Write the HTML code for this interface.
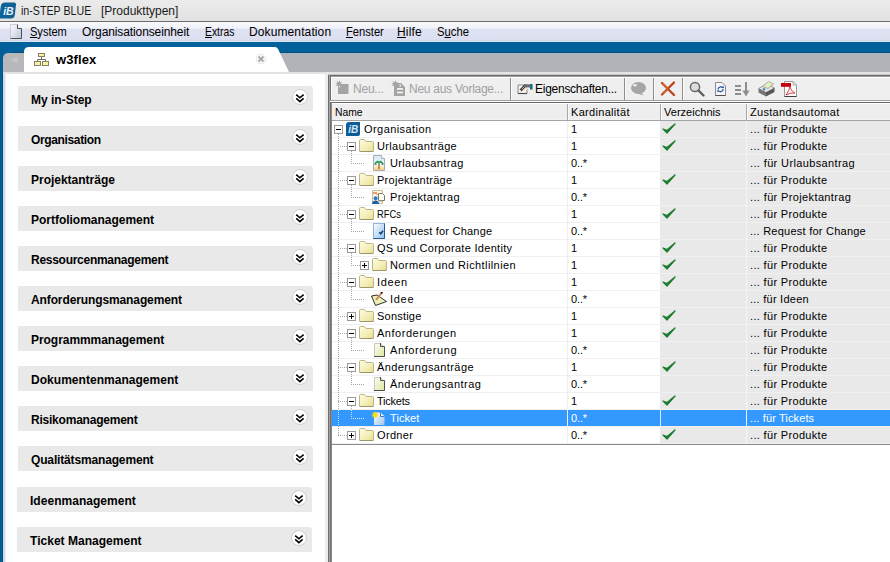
<!DOCTYPE html><html><head><meta charset="utf-8"><style>
*{margin:0;padding:0;box-sizing:border-box}
html,body{width:890px;height:562px;overflow:hidden;background:#fff;font-family:"Liberation Sans", sans-serif;font-size:12px;color:#000}
.abs{position:absolute}
.t{position:absolute;white-space:pre;line-height:16px}
.sec{position:absolute;width:295px;height:25px;background:#e9e9e9;border-radius:1px 3px 0 0}
.chev{position:absolute;left:274px;top:3px;width:16px;height:16px;border-radius:50%;background:#fff;border:1px solid #cfcfcf}
.exp{position:absolute;width:9px;height:9px;border:1px solid #9a9a9a;background:#fff}
</style></head><body>
<div class="abs" style="left:0;top:0;width:890px;height:21px;background:linear-gradient(#ebebeb,#e2e2e2)"></div>
<svg class="abs" style="left:0;top:2px" width="17" height="17" viewBox="0 0 17 17"><path d="M5 0.5 H14 Q16.5 0.5 16 3 L14.8 13 Q14.3 16.5 11 16.5 H1 Q-1 16.5 -0.5 14 L0.8 4 Q1.3 0.5 5 0.5Z" fill="#0f6298"/><text x="3.2" y="12.6" font-family="Liberation Sans" font-weight="bold" font-style="italic" font-size="10.5" fill="#e8f4fc">iB</text></svg>
<div class="t" style="left:21px;top:3px;font-size:12px;color:#1a1a1a;letter-spacing:0;transform:scaleX(0.8884);transform-origin:0 0">in-STEP BLUE</div>
<div class="t" style="left:101px;top:3px;font-size:12px;color:#1a1a1a;letter-spacing:-0.003px">[Produkttypen]</div>
<div class="abs" style="left:0;top:21px;width:890px;height:1px;background:#6e6e6e"></div>
<div class="abs" style="left:0;top:22px;width:890px;height:19px;background:linear-gradient(#f8f9fd 0,#f1f3fa 6px,#dfe2f1 7px,#dcdff0 18px,#cdd0de 19px)"></div>
<div class="abs" style="left:0;top:41px;width:890px;height:1px;background:#d6eaf6"></div>
<svg class="abs" style="left:10px;top:24px" width="12" height="15" viewBox="0 0 12 15"><defs><linearGradient id="mg" x1="0" y1="0" x2="1" y2="1"><stop offset="0" stop-color="#ffffff"/><stop offset="1" stop-color="#b8c4d8"/></linearGradient></defs><path d="M0.5 14.5 V0.5 H7.5 V4.5 H11.5 V14.5Z" fill="url(#mg)" stroke="#c8ccd4"/><path d="M7.5 0.5 V4.5 H11.5 V14.5 H0.5" fill="none" stroke="#505050"/></svg>
<div class="t" style="left:30px;top:24px;font-size:12px;letter-spacing:0;transform:scaleX(0.9197);transform-origin:0 0"><u>S</u>ystem</div>
<div class="t" style="left:82px;top:24px;font-size:12px;letter-spacing:-0.109px">Organisationseinheit</div>
<div class="t" style="left:205px;top:24px;font-size:12px;letter-spacing:0;transform:scaleX(0.8616);transform-origin:0 0"><u>E</u>xtras</div>
<div class="t" style="left:249px;top:24px;font-size:12px;letter-spacing:0.113px">Dokumentation</div>
<div class="t" style="left:346px;top:24px;font-size:12px;letter-spacing:0;transform:scaleX(0.9291);transform-origin:0 0"><u>F</u>enster</div>
<div class="t" style="left:397px;top:24px;font-size:12px;letter-spacing:0.192px"><u>H</u>ilfe</div>
<div class="t" style="left:437px;top:24px;font-size:12px;letter-spacing:0;transform:scaleX(0.9374);transform-origin:0 0">S<u>u</u>che</div>
<div class="abs" style="left:0;top:42px;width:890px;height:10px;background:#02619a"></div>
<div class="abs" style="left:0;top:52px;width:890px;height:1px;background:#0a4f7c"></div>
<div class="abs" style="left:0;top:53px;width:890px;height:1px;background:#a2b9c9"></div>
<div class="abs" style="left:0;top:42px;width:3px;height:520px;background:#045f97"></div>
<div class="abs" style="left:2px;top:72px;width:1px;height:490px;background:#0b4f7a"></div>
<div class="abs" style="left:3px;top:72px;width:1px;height:490px;background:#c6e2f2"></div>
<div class="abs" style="left:4px;top:74px;width:1px;height:488px;background:#dadada"></div>
<div class="abs" style="left:5px;top:74px;width:1px;height:488px;background:#efefef"></div>
<div class="abs" style="left:30px;top:54px;width:860px;height:18px;background:#b0b3b7"></div>
<div class="abs" style="left:3px;top:52px;width:10px;height:10px;background:#045f97"></div>
<div class="abs" style="left:3px;top:53px;width:30px;height:19px;background:#b7b8bb;border-top-left-radius:5px"></div>
<svg class="abs" style="left:8px;top:55px" width="12" height="10" viewBox="0 0 12 10"><path d="M9.5 1.5 L2 5 L9.5 8.5Z" fill="#c4c5c8"/></svg>
<svg class="abs" style="left:0;top:46px" width="300" height="28" viewBox="0 0 300 28"><path d="M24 27 V6 Q24 1 29 1 H275 Q277 1 278 3 L289.5 27 Z" fill="#ffffff"/></svg>
<svg class="abs" style="left:34px;top:53px" width="15" height="13" viewBox="0 0 15 13"><g fill="#f6f0a8" stroke="#86805e"><rect x="4.5" y="0.5" width="6" height="3"/><rect x="0.5" y="8.5" width="6" height="4"/><rect x="8.5" y="8.5" width="6" height="4"/></g><path d="M7.5 4 V6.5 M3.5 8 V6.5 H11.5 V8" stroke="#6e6e68" fill="none"/></svg>
<div class="t" style="left:56px;top:52px;font-size:13px;font-weight:700;letter-spacing:0.097px">w3flex</div>
<svg class="abs" style="left:255px;top:53px" width="12" height="12" viewBox="0 0 12 12"><circle cx="6" cy="6" r="4.8" fill="#fafafa" stroke="#e6e6e6"/><path d="M3.5 3.5 L8.5 8.5 M8.5 3.5 L3.5 8.5" stroke="#a9a9a9" stroke-width="1.8"/></svg>
<div class="abs" style="left:4px;top:72px;width:886px;height:2px;background:#e3e4e6"></div>
<div class="abs" style="left:325px;top:73px;width:3px;height:489px;background:#ececec"></div>
<div class="sec" style="left:18px;top:86px"><div class="chev"><svg class="abs" style="left:-1px;top:-1px" width="16" height="16" viewBox="0 0 16 16"><path d="M4.2 5.6 L7.9 8.8 L11.6 5.6 M4.2 9.4 L7.9 12.6 L11.6 9.4" fill="none" stroke="#000" stroke-width="1.6"/></svg></div></div>
<div class="t" style="left:31px;top:92px;font-size:12px;font-weight:700;color:#000;letter-spacing:-0.004px">My in-Step</div>
<div class="sec" style="left:18px;top:126px"><div class="chev"><svg class="abs" style="left:-1px;top:-1px" width="16" height="16" viewBox="0 0 16 16"><path d="M4.2 5.6 L7.9 8.8 L11.6 5.6 M4.2 9.4 L7.9 12.6 L11.6 9.4" fill="none" stroke="#000" stroke-width="1.6"/></svg></div></div>
<div class="t" style="left:31px;top:132px;font-size:12px;font-weight:700;color:#000;letter-spacing:-0.353px">Organisation</div>
<div class="sec" style="left:18px;top:166px"><div class="chev"><svg class="abs" style="left:-1px;top:-1px" width="16" height="16" viewBox="0 0 16 16"><path d="M4.2 5.6 L7.9 8.8 L11.6 5.6 M4.2 9.4 L7.9 12.6 L11.6 9.4" fill="none" stroke="#000" stroke-width="1.6"/></svg></div></div>
<div class="t" style="left:31px;top:172px;font-size:12px;font-weight:700;color:#000;letter-spacing:-0.012px">Projektanträge</div>
<div class="sec" style="left:18px;top:206px"><div class="chev"><svg class="abs" style="left:-1px;top:-1px" width="16" height="16" viewBox="0 0 16 16"><path d="M4.2 5.6 L7.9 8.8 L11.6 5.6 M4.2 9.4 L7.9 12.6 L11.6 9.4" fill="none" stroke="#000" stroke-width="1.6"/></svg></div></div>
<div class="t" style="left:31px;top:212px;font-size:12px;font-weight:700;color:#000;letter-spacing:-0.019px">Portfoliomanagement</div>
<div class="sec" style="left:18px;top:246px"><div class="chev"><svg class="abs" style="left:-1px;top:-1px" width="16" height="16" viewBox="0 0 16 16"><path d="M4.2 5.6 L7.9 8.8 L11.6 5.6 M4.2 9.4 L7.9 12.6 L11.6 9.4" fill="none" stroke="#000" stroke-width="1.6"/></svg></div></div>
<div class="t" style="left:31px;top:252px;font-size:12px;font-weight:700;color:#000;letter-spacing:-0.275px">Ressourcenmanagement</div>
<div class="sec" style="left:18px;top:286px"><div class="chev"><svg class="abs" style="left:-1px;top:-1px" width="16" height="16" viewBox="0 0 16 16"><path d="M4.2 5.6 L7.9 8.8 L11.6 5.6 M4.2 9.4 L7.9 12.6 L11.6 9.4" fill="none" stroke="#000" stroke-width="1.6"/></svg></div></div>
<div class="t" style="left:31px;top:292px;font-size:12px;font-weight:700;color:#000;letter-spacing:-0.112px">Anforderungsmanagement</div>
<div class="sec" style="left:18px;top:326px"><div class="chev"><svg class="abs" style="left:-1px;top:-1px" width="16" height="16" viewBox="0 0 16 16"><path d="M4.2 5.6 L7.9 8.8 L11.6 5.6 M4.2 9.4 L7.9 12.6 L11.6 9.4" fill="none" stroke="#000" stroke-width="1.6"/></svg></div></div>
<div class="t" style="left:31px;top:332px;font-size:12px;font-weight:700;color:#000;letter-spacing:-0.050px">Programmmanagement</div>
<div class="sec" style="left:18px;top:366px"><div class="chev"><svg class="abs" style="left:-1px;top:-1px" width="16" height="16" viewBox="0 0 16 16"><path d="M4.2 5.6 L7.9 8.8 L11.6 5.6 M4.2 9.4 L7.9 12.6 L11.6 9.4" fill="none" stroke="#000" stroke-width="1.6"/></svg></div></div>
<div class="t" style="left:31px;top:372px;font-size:12px;font-weight:700;color:#000;letter-spacing:0.032px">Dokumentenmanagement</div>
<div class="sec" style="left:18px;top:406px"><div class="chev"><svg class="abs" style="left:-1px;top:-1px" width="16" height="16" viewBox="0 0 16 16"><path d="M4.2 5.6 L7.9 8.8 L11.6 5.6 M4.2 9.4 L7.9 12.6 L11.6 9.4" fill="none" stroke="#000" stroke-width="1.6"/></svg></div></div>
<div class="t" style="left:31px;top:412px;font-size:12px;font-weight:700;color:#000;letter-spacing:-0.222px">Risikomanagement</div>
<div class="sec" style="left:18px;top:446px"><div class="chev"><svg class="abs" style="left:-1px;top:-1px" width="16" height="16" viewBox="0 0 16 16"><path d="M4.2 5.6 L7.9 8.8 L11.6 5.6 M4.2 9.4 L7.9 12.6 L11.6 9.4" fill="none" stroke="#000" stroke-width="1.6"/></svg></div></div>
<div class="t" style="left:31px;top:452px;font-size:12px;font-weight:700;color:#000;letter-spacing:-0.154px">Qualitätsmanagement</div>
<div class="sec" style="left:17px;top:487px"><div class="chev"><svg class="abs" style="left:-1px;top:-1px" width="16" height="16" viewBox="0 0 16 16"><path d="M4.2 5.6 L7.9 8.8 L11.6 5.6 M4.2 9.4 L7.9 12.6 L11.6 9.4" fill="none" stroke="#000" stroke-width="1.6"/></svg></div></div>
<div class="t" style="left:30px;top:493px;font-size:12px;font-weight:700;color:#000;letter-spacing:0.031px">Ideenmanagement</div>
<div class="sec" style="left:17px;top:527px"><div class="chev"><svg class="abs" style="left:-1px;top:-1px" width="16" height="16" viewBox="0 0 16 16"><path d="M4.2 5.6 L7.9 8.8 L11.6 5.6 M4.2 9.4 L7.9 12.6 L11.6 9.4" fill="none" stroke="#000" stroke-width="1.6"/></svg></div></div>
<div class="t" style="left:30px;top:533px;font-size:12px;font-weight:700;color:#000;letter-spacing:0.022px">Ticket Management</div>
<div class="abs" style="left:328px;top:74px;width:562px;height:1px;background:#c8c8c8"></div>
<div class="abs" style="left:328px;top:75px;width:562px;height:1px;background:#6a6a6a"></div>
<div class="abs" style="left:328px;top:76px;width:562px;height:1px;background:#9c9c9c"></div>
<div class="abs" style="left:331px;top:77px;width:559px;height:1px;background:#ffffff"></div>
<div class="abs" style="left:332px;top:78px;width:558px;height:22px;background:#efefef"></div>
<div class="abs" style="left:328px;top:75px;width:1px;height:487px;background:#6e6e6e"></div>
<div class="abs" style="left:329px;top:75px;width:1px;height:487px;background:#a2a2a2"></div>
<div class="abs" style="left:330px;top:75px;width:1px;height:487px;background:#6e6e6e"></div>
<div class="abs" style="left:331px;top:77px;width:1px;height:24px;background:#ffffff"></div>
<div class="abs" style="left:330px;top:100px;width:560px;height:1px;background:#a0a0a0"></div>
<div class="abs" style="left:330px;top:101px;width:560px;height:1px;background:#ffffff"></div>
<div class="abs" style="left:330px;top:102px;width:560px;height:1px;background:#6a6a6a"></div>
<div class="abs" style="left:331px;top:102px;width:1px;height:460px;background:#8a8a8a"></div>
<svg class="abs" style="left:332px;top:77px" width="558" height="24" viewBox="0 0 558 24"><rect x="6" y="7" width="10.5" height="10" fill="#a4a4a4"/><path d="M10.92,7.79 L8.49,8.01 L9.21,10.33 L7.34,8.77 L6.21,10.92 L5.99,8.49 L3.67,9.21 L5.23,7.34 L3.08,6.21 L5.51,5.99 L4.79,3.67 L6.66,5.23 L7.79,3.08 L8.01,5.51 L10.33,4.79 L8.77,6.66Z" fill="#a4a4a4"/><rect x="7" y="9" width="1.2" height="1.2" fill="#f4f4f4"/><path d="M62 6 H69 L73 10 V19 H62Z" fill="#a4a4a4"/><rect x="65" y="11" width="6" height="1.8" fill="#efefef"/><rect x="65" y="14.6" width="6" height="1.8" fill="#efefef"/><rect x="67.5" y="7.5" width="1.5" height="2" fill="#efefef"/><path d="M66.92,7.79 L64.49,8.01 L65.21,10.33 L63.34,8.77 L62.21,10.92 L61.99,8.49 L59.67,9.21 L61.23,7.34 L59.08,6.21 L61.51,5.99 L60.79,3.67 L62.66,5.23 L63.79,3.08 L64.01,5.51 L66.33,4.79 L64.77,6.66Z" fill="#a4a4a4"/><rect x="178" y="1" width="1" height="22" fill="#8e8e8e"/><rect x="179" y="1" width="1" height="22" fill="#fafafa"/><rect x="292" y="1" width="1" height="22" fill="#8e8e8e"/><rect x="293" y="1" width="1" height="22" fill="#fafafa"/><rect x="321" y="1" width="1" height="22" fill="#8e8e8e"/><rect x="322" y="1" width="1" height="22" fill="#fafafa"/><rect x="350" y="1" width="1" height="22" fill="#8e8e8e"/><rect x="351" y="1" width="1" height="22" fill="#fafafa"/><path d="M186 8 H195 V16.5 H186Z" fill="#f6f6f6" stroke="#7a7a7a" stroke-width="0.9"/><path d="M186 16.5 H195" stroke="#505050" stroke-width="1.2"/><path d="M188.5 13.5 L193 9 H198" fill="none" stroke="#404040" stroke-width="2.8"/><path d="M188.5 13.5 L193 9 H198" fill="none" stroke="#e8e8e8" stroke-width="1" stroke-dasharray="1 1"/><path d="M190 14 L193.5 10.5 H197.5 L195 13 H191Z" fill="#f4e0c8"/><rect x="198" y="7" width="2.6" height="5.5" fill="#17708f"/><ellipse cx="306.5" cy="11" rx="7.5" ry="6" fill="#a6a6a6"/><path d="M308 15 L312 18.5 L303 16Z" fill="#a6a6a6"/><ellipse cx="303" cy="8.3" rx="2" ry="1.1" fill="#f4f4f4"/><path d="M330 6 L342 18 M342 5.5 L330 17.5" stroke="#b8481c" stroke-width="2.4" stroke-linecap="round"/><path d="M330.5 6.2 L336 11.5 M331 16.5 L335 12.5" stroke="#f08040" stroke-width="1"/><circle cx="363" cy="10" r="4.6" fill="#dcdcdc" stroke="#6a6a6a" stroke-width="1.5"/><path d="M366.5 13.5 L371.5 18.5" stroke="#5e5e5e" stroke-width="2.4" stroke-linecap="round"/><path d="M383.5 5.5 H390 L393.5 9 V18.5 H383.5Z" fill="#f6f6f6" stroke="#8a8a8a"/><path d="M383.5 18.5 H393.5" stroke="#505050"/><path d="M386 12.5 A2.8 2.8 0 0 1 391 11 M391.2 12 A2.8 2.8 0 0 1 386.2 13.5" stroke="#1a4fa0" fill="none" stroke-width="1.2"/><path d="M390 10 L391.8 11.6 L392 9.3Z M387 14.5 L385.5 12.8 L385.2 15Z" fill="#1a4fa0"/><g fill="#8e8e8e"><rect x="403" y="8" width="6" height="2"/><rect x="403" y="12" width="6" height="2"/><rect x="403" y="16" width="6" height="2"/><rect x="413" y="5" width="2" height="10"/><path d="M410.5 13.5 H417.5 L414 19.5Z"/></g><path d="M426.5 11.5 L435 7 L442.5 11 L434 15.5Z" fill="#e4e4e4" stroke="#8a8a8a" stroke-width="0.8"/><path d="M426.5 11.5 L434 15.5 V19.5 L426.5 15.5Z" fill="#6e6e6e"/><path d="M434 15.5 L442.5 11 V15 L434 19.5Z" fill="#4e4e4e"/><path d="M430.5 9.5 L436.5 4.5 L441.5 7 L436 11.5Z" fill="#e6eec0" stroke="#9a9a88" stroke-width="0.8"/><circle cx="432" cy="12.2" r="1.2" fill="#3a8ad0"/><path d="M427 14 L434 17.8 L442 13.5" stroke="#9a9a9a" stroke-width="0.7" fill="none" stroke-dasharray="1 1"/><path d="M452.5 4.5 H461 L464.5 8 V19.5 H452.5Z" fill="#fbfbfb" stroke="#9a9a9a"/><path d="M452.5 19.5 H464.5" stroke="#404040"/><path d="M461 4.5 V8 H464.5" fill="none" stroke="#b0b0b0"/><rect x="449" y="6" width="10" height="3.8" fill="#c4000e"/><path d="M454 18 Q457 14 458 9.5 Q458.5 14 463 16 Q458 15.5 454 18Z" fill="none" stroke="#d83030" stroke-width="0.9"/></svg>
<div class="t" style="left:353px;top:81px;font-size:12px;color:#a0a0a0;letter-spacing:-0.216px">Neu...</div>
<div class="t" style="left:409px;top:81px;font-size:12px;color:#a0a0a0;letter-spacing:-0.264px">Neu aus Vorlage...</div>
<div class="t" style="left:535px;top:81px;font-size:12px;letter-spacing:-0.262px">Eigenschaften...</div>
<div class="abs" style="left:332px;top:103px;width:558px;height:1px;background:#ffffff"></div>
<div class="abs" style="left:332px;top:104px;width:558px;height:16px;background:linear-gradient(#eeeeee 0,#eeeeee 15px,#f6f6f6 16px)"></div>
<div class="abs" style="left:332px;top:120px;width:558px;height:1px;background:#a4a4a4"></div>
<div class="abs" style="left:567px;top:104px;width:1px;height:16px;background:#a8a8a8"></div><div class="abs" style="left:568px;top:104px;width:1px;height:16px;background:#fbfbfb"></div>
<div class="abs" style="left:660px;top:104px;width:1px;height:16px;background:#a8a8a8"></div><div class="abs" style="left:661px;top:104px;width:1px;height:16px;background:#fbfbfb"></div>
<div class="abs" style="left:746px;top:104px;width:1px;height:16px;background:#a8a8a8"></div><div class="abs" style="left:747px;top:104px;width:1px;height:16px;background:#fbfbfb"></div>
<div class="t" style="left:335px;top:104px;font-size:11px;letter-spacing:0;transform:scaleX(0.9410);transform-origin:0 0">Name</div>
<div class="t" style="left:571px;top:104px;font-size:11px;letter-spacing:0.311px">Kardinalität</div>
<div class="t" style="left:664px;top:104px;font-size:11px;letter-spacing:0.025px">Verzeichnis</div>
<div class="t" style="left:750px;top:104px;font-size:11px;letter-spacing:0.305px">Zustandsautomat</div>
<div class="abs" style="left:660px;top:121px;width:230px;height:323px;background:#e9e9e9"></div>
<div class="abs" style="left:332px;top:137px;width:558px;height:1px;background:#f0f0f0"></div>
<div class="abs" style="left:332px;top:154px;width:558px;height:1px;background:#f0f0f0"></div>
<div class="abs" style="left:332px;top:171px;width:558px;height:1px;background:#f0f0f0"></div>
<div class="abs" style="left:332px;top:188px;width:558px;height:1px;background:#f0f0f0"></div>
<div class="abs" style="left:332px;top:205px;width:558px;height:1px;background:#f0f0f0"></div>
<div class="abs" style="left:332px;top:222px;width:558px;height:1px;background:#f0f0f0"></div>
<div class="abs" style="left:332px;top:239px;width:558px;height:1px;background:#f0f0f0"></div>
<div class="abs" style="left:332px;top:256px;width:558px;height:1px;background:#f0f0f0"></div>
<div class="abs" style="left:332px;top:273px;width:558px;height:1px;background:#f0f0f0"></div>
<div class="abs" style="left:332px;top:290px;width:558px;height:1px;background:#f0f0f0"></div>
<div class="abs" style="left:332px;top:307px;width:558px;height:1px;background:#f0f0f0"></div>
<div class="abs" style="left:332px;top:324px;width:558px;height:1px;background:#f0f0f0"></div>
<div class="abs" style="left:332px;top:341px;width:558px;height:1px;background:#f0f0f0"></div>
<div class="abs" style="left:332px;top:358px;width:558px;height:1px;background:#f0f0f0"></div>
<div class="abs" style="left:332px;top:375px;width:558px;height:1px;background:#f0f0f0"></div>
<div class="abs" style="left:332px;top:392px;width:558px;height:1px;background:#f0f0f0"></div>
<div class="abs" style="left:332px;top:409px;width:558px;height:1px;background:#f0f0f0"></div>
<div class="abs" style="left:332px;top:426px;width:558px;height:1px;background:#f0f0f0"></div>
<div class="abs" style="left:332px;top:410px;width:558px;height:16px;background:#3399ff"></div>
<div class="abs" style="left:332px;top:443px;width:558px;height:1px;background:#f0f0f0"></div>
<div class="abs" style="left:567px;top:121px;width:1px;height:323px;background:#efefef"></div>
<div class="abs" style="left:746px;top:121px;width:1px;height:323px;background:#f4f4f4"></div>
<div class="abs" style="left:660px;top:410px;width:1px;height:16px;background:#dcecff"></div>
<div class="abs" style="left:332px;top:444px;width:558px;height:1px;background:#8a8a8a"></div>
<div class="abs" style="left:338px;top:134px;width:1px;height:301px;background:repeating-linear-gradient(to bottom,#a8a8a8 0 1px,transparent 1px 2px)"></div>
<div class="abs" style="left:338px;top:146px;width:9px;height:1px;background:repeating-linear-gradient(to right,#a8a8a8 0 1px,transparent 1px 2px)"></div>
<div class="abs" style="left:351px;top:163px;width:14px;height:1px;background:repeating-linear-gradient(to right,#a8a8a8 0 1px,transparent 1px 2px)"></div>
<div class="abs" style="left:338px;top:180px;width:9px;height:1px;background:repeating-linear-gradient(to right,#a8a8a8 0 1px,transparent 1px 2px)"></div>
<div class="abs" style="left:351px;top:197px;width:14px;height:1px;background:repeating-linear-gradient(to right,#a8a8a8 0 1px,transparent 1px 2px)"></div>
<div class="abs" style="left:338px;top:214px;width:9px;height:1px;background:repeating-linear-gradient(to right,#a8a8a8 0 1px,transparent 1px 2px)"></div>
<div class="abs" style="left:351px;top:231px;width:14px;height:1px;background:repeating-linear-gradient(to right,#a8a8a8 0 1px,transparent 1px 2px)"></div>
<div class="abs" style="left:338px;top:248px;width:9px;height:1px;background:repeating-linear-gradient(to right,#a8a8a8 0 1px,transparent 1px 2px)"></div>
<div class="abs" style="left:351px;top:265px;width:9px;height:1px;background:repeating-linear-gradient(to right,#a8a8a8 0 1px,transparent 1px 2px)"></div>
<div class="abs" style="left:338px;top:282px;width:9px;height:1px;background:repeating-linear-gradient(to right,#a8a8a8 0 1px,transparent 1px 2px)"></div>
<div class="abs" style="left:351px;top:299px;width:14px;height:1px;background:repeating-linear-gradient(to right,#a8a8a8 0 1px,transparent 1px 2px)"></div>
<div class="abs" style="left:338px;top:316px;width:9px;height:1px;background:repeating-linear-gradient(to right,#a8a8a8 0 1px,transparent 1px 2px)"></div>
<div class="abs" style="left:338px;top:333px;width:9px;height:1px;background:repeating-linear-gradient(to right,#a8a8a8 0 1px,transparent 1px 2px)"></div>
<div class="abs" style="left:351px;top:350px;width:14px;height:1px;background:repeating-linear-gradient(to right,#a8a8a8 0 1px,transparent 1px 2px)"></div>
<div class="abs" style="left:338px;top:367px;width:9px;height:1px;background:repeating-linear-gradient(to right,#a8a8a8 0 1px,transparent 1px 2px)"></div>
<div class="abs" style="left:351px;top:384px;width:14px;height:1px;background:repeating-linear-gradient(to right,#a8a8a8 0 1px,transparent 1px 2px)"></div>
<div class="abs" style="left:338px;top:401px;width:9px;height:1px;background:repeating-linear-gradient(to right,#a8a8a8 0 1px,transparent 1px 2px)"></div>
<div class="abs" style="left:351px;top:418px;width:14px;height:1px;background:repeating-linear-gradient(to right,#e0ecfa 0 1px,transparent 1px 2px)"></div>
<div class="abs" style="left:338px;top:435px;width:9px;height:1px;background:repeating-linear-gradient(to right,#a8a8a8 0 1px,transparent 1px 2px)"></div>
<div class="abs" style="left:351px;top:151px;width:1px;height:13px;background:repeating-linear-gradient(to bottom,#a8a8a8 0 1px,transparent 1px 2px)"></div>
<div class="abs" style="left:351px;top:185px;width:1px;height:13px;background:repeating-linear-gradient(to bottom,#a8a8a8 0 1px,transparent 1px 2px)"></div>
<div class="abs" style="left:351px;top:219px;width:1px;height:13px;background:repeating-linear-gradient(to bottom,#a8a8a8 0 1px,transparent 1px 2px)"></div>
<div class="abs" style="left:351px;top:253px;width:1px;height:13px;background:repeating-linear-gradient(to bottom,#a8a8a8 0 1px,transparent 1px 2px)"></div>
<div class="abs" style="left:351px;top:287px;width:1px;height:13px;background:repeating-linear-gradient(to bottom,#a8a8a8 0 1px,transparent 1px 2px)"></div>
<div class="abs" style="left:351px;top:338px;width:1px;height:13px;background:repeating-linear-gradient(to bottom,#a8a8a8 0 1px,transparent 1px 2px)"></div>
<div class="abs" style="left:351px;top:372px;width:1px;height:13px;background:repeating-linear-gradient(to bottom,#a8a8a8 0 1px,transparent 1px 2px)"></div>
<div class="abs" style="left:351px;top:406px;width:1px;height:13px;background:repeating-linear-gradient(to bottom,#a8a8a8 0 1px,transparent 1px 2px)"></div>
<div class="abs" style="left:338px;top:410px;width:1px;height:16px;background:repeating-linear-gradient(to bottom,#cfe3fb 0 1px,transparent 1px 2px)"></div>
<div class="abs" style="left:351px;top:410px;width:1px;height:9px;background:repeating-linear-gradient(to bottom,#cfe3fb 0 1px,transparent 1px 2px)"></div>
<div class="exp" style="left:334px;top:125px"><div class="abs" style="left:1px;top:3px;width:5px;height:1px;background:#000"></div></div>
<div class="abs" style="left:346px;top:122px;width:14px;height:14px"><svg width="14" height="14" viewBox="0 0 14 14"><path d="M3 0 H14 V12 Q14 14 12 14 H0 V3 Q0 0 3 0Z" fill="#0d5e96"/><text x="2.2" y="11" font-family="Liberation Sans" font-weight="bold" font-style="italic" font-size="10" fill="#cfe6f7">iB</text></svg></div>
<div class="t" style="left:364px;top:121px;font-size:11px;color:#000;letter-spacing:0.432px">Organisation</div>
<div class="t" style="left:571px;top:121px;font-size:11px;color:#000;letter-spacing:0.000px">1</div>
<svg class="abs" style="left:662px;top:123px" width="14" height="11" viewBox="0 0 14 11"><path d="M1 6 L5 10 L13 1 L5 7.5Z" fill="#1c7c30" stroke="#1c7c30" stroke-width="1.2" stroke-linejoin="round"/></svg>
<div class="t" style="left:750px;top:121px;font-size:11px;color:#000;letter-spacing:0.332px">... für Produkte</div>
<div class="exp" style="left:347px;top:142px"><div class="abs" style="left:1px;top:3px;width:5px;height:1px;background:#000"></div></div>
<div class="abs" style="left:359px;top:139px;width:15px;height:13px"><svg width="15" height="13" viewBox="0 0 15 13"><defs><linearGradient id="fg1" x1="0" y1="0" x2="1" y2="1"><stop offset="0" stop-color="#fdfbe0"/><stop offset="0.6" stop-color="#f3eeb6"/><stop offset="1" stop-color="#e4db8e"/></linearGradient></defs><path d="M0.5 12.5 V1.5 Q0.5 0.5 1.5 0.5 H5.5 L7 2.5 H13.5 Q14.5 2.5 14.5 3.5 V12.5 Z" fill="url(#fg1)" stroke="#bdb58a"/><path d="M1 12.5 H14" stroke="#9d9670"/></svg></div>
<div class="t" style="left:377px;top:138px;font-size:11px;color:#000;letter-spacing:0.347px">Urlaubsanträge</div>
<div class="t" style="left:571px;top:138px;font-size:11px;color:#000;letter-spacing:0.000px">1</div>
<svg class="abs" style="left:662px;top:140px" width="14" height="11" viewBox="0 0 14 11"><path d="M1 6 L5 10 L13 1 L5 7.5Z" fill="#1c7c30" stroke="#1c7c30" stroke-width="1.2" stroke-linejoin="round"/></svg>
<div class="t" style="left:750px;top:138px;font-size:11px;color:#000;letter-spacing:0.332px">... für Produkte</div>
<div class="abs" style="left:373px;top:155px;width:12px;height:16px"><svg width="12" height="16" viewBox="0 0 12 16"><defs><linearGradient id="pg" x1="0" y1="0" x2="0" y2="1"><stop offset="0" stop-color="#dbe8f6"/><stop offset="0.6" stop-color="#e6f6fb"/><stop offset="0.7" stop-color="#fbefd0"/><stop offset="1" stop-color="#f6c870"/></linearGradient></defs><path d="M0.5 0.5 H8.5 L11.5 3.5 V15.5 H0.5Z" fill="url(#pg)" stroke="#a8acb0"/><path d="M8.5 0.5 V3.5 H11.5" fill="#fff" stroke="#b0b4b8"/><path d="M6 7 V14" stroke="#8a5a20" stroke-width="1.2"/><path d="M1 10.5 L2 7.5 L4.5 5.5 L6 6.5 L7.5 5.5 L10 7.5 L11 10.5 L9.5 8.5 L8 8 L6 7.5 L4 8 L2.5 8.5Z" fill="#239a58"/><path d="M2.5 8 L3 10 M9.5 8 L9 10" stroke="#1a7040" stroke-width="1"/></svg></div>
<div class="t" style="left:390px;top:155px;font-size:11px;color:#000;letter-spacing:0.352px">Urlaubsantrag</div>
<div class="t" style="left:571px;top:155px;font-size:11px;color:#000;letter-spacing:-0.143px">0..*</div>
<div class="t" style="left:750px;top:155px;font-size:11px;color:#000;letter-spacing:0.370px">... für Urlaubsantrag</div>
<div class="exp" style="left:347px;top:176px"><div class="abs" style="left:1px;top:3px;width:5px;height:1px;background:#000"></div></div>
<div class="abs" style="left:359px;top:173px;width:15px;height:13px"><svg width="15" height="13" viewBox="0 0 15 13"><defs><linearGradient id="fg3" x1="0" y1="0" x2="1" y2="1"><stop offset="0" stop-color="#fdfbe0"/><stop offset="0.6" stop-color="#f3eeb6"/><stop offset="1" stop-color="#e4db8e"/></linearGradient></defs><path d="M0.5 12.5 V1.5 Q0.5 0.5 1.5 0.5 H5.5 L7 2.5 H13.5 Q14.5 2.5 14.5 3.5 V12.5 Z" fill="url(#fg3)" stroke="#bdb58a"/><path d="M1 12.5 H14" stroke="#9d9670"/></svg></div>
<div class="t" style="left:377px;top:172px;font-size:11px;color:#000;letter-spacing:0.275px">Projektanträge</div>
<div class="t" style="left:571px;top:172px;font-size:11px;color:#000;letter-spacing:0.000px">1</div>
<svg class="abs" style="left:662px;top:174px" width="14" height="11" viewBox="0 0 14 11"><path d="M1 6 L5 10 L13 1 L5 7.5Z" fill="#1c7c30" stroke="#1c7c30" stroke-width="1.2" stroke-linejoin="round"/></svg>
<div class="t" style="left:750px;top:172px;font-size:11px;color:#000;letter-spacing:0.332px">... für Produkte</div>
<div class="abs" style="left:372px;top:190px;width:14px;height:14px"><svg width="14" height="14" viewBox="0 0 14 14"><path d="M0.5 0.5 H10.5 V13.5 H0.5Z" fill="#fbf7e4" stroke="#c8bca0"/><rect x="1" y="2" width="4" height="2" fill="#f09a70"/><rect x="4" y="4" width="2" height="1" fill="#f0b090"/><path d="M7.5 3.5 H10.5 L12.5 5.5 V10.5 H6.5 V3.5Z" fill="#fffef6" stroke="#7a7460"/><path d="M6.5 11 H10.5" stroke="#a8a488"/><circle cx="3.6" cy="8.2" r="2" fill="#2a7ac8"/><path d="M0 14 Q0.3 10.5 3.6 10.5 Q6.8 10.5 7 14Z" fill="#1a5fa8"/></svg></div>
<div class="t" style="left:390px;top:189px;font-size:11px;color:#000;letter-spacing:0.349px">Projektantrag</div>
<div class="t" style="left:571px;top:189px;font-size:11px;color:#000;letter-spacing:-0.143px">0..*</div>
<div class="t" style="left:750px;top:189px;font-size:11px;color:#000;letter-spacing:0.369px">... für Projektantrag</div>
<div class="exp" style="left:347px;top:210px"><div class="abs" style="left:1px;top:3px;width:5px;height:1px;background:#000"></div></div>
<div class="abs" style="left:359px;top:207px;width:15px;height:13px"><svg width="15" height="13" viewBox="0 0 15 13"><defs><linearGradient id="fg5" x1="0" y1="0" x2="1" y2="1"><stop offset="0" stop-color="#fdfbe0"/><stop offset="0.6" stop-color="#f3eeb6"/><stop offset="1" stop-color="#e4db8e"/></linearGradient></defs><path d="M0.5 12.5 V1.5 Q0.5 0.5 1.5 0.5 H5.5 L7 2.5 H13.5 Q14.5 2.5 14.5 3.5 V12.5 Z" fill="url(#fg5)" stroke="#bdb58a"/><path d="M1 12.5 H14" stroke="#9d9670"/></svg></div>
<div class="t" style="left:377px;top:206px;font-size:11px;color:#000;letter-spacing:0;transform:scaleX(0.8494);transform-origin:0 0">RFCs</div>
<div class="t" style="left:571px;top:206px;font-size:11px;color:#000;letter-spacing:0.000px">1</div>
<svg class="abs" style="left:662px;top:208px" width="14" height="11" viewBox="0 0 14 11"><path d="M1 6 L5 10 L13 1 L5 7.5Z" fill="#1c7c30" stroke="#1c7c30" stroke-width="1.2" stroke-linejoin="round"/></svg>
<div class="t" style="left:750px;top:206px;font-size:11px;color:#000;letter-spacing:0.332px">... für Produkte</div>
<div class="abs" style="left:373px;top:223px;width:12px;height:16px"><svg width="12" height="16" viewBox="0 0 12 16"><defs><linearGradient id="rg" x1="0" y1="0" x2="1" y2="1"><stop offset="0" stop-color="#ffffff"/><stop offset="1" stop-color="#8ec0f0"/></linearGradient></defs><rect x="0.5" y="0.5" width="11" height="15" fill="url(#rg)" stroke="#8fb4dc"/><path d="M11.5 0.5 V15.5 H0.5" fill="none" stroke="#2a5a90"/><path d="M6.3 9.2 L7.8 10.8 L10 7.8" fill="none" stroke="#1a3f70" stroke-width="1.6"/></svg></div>
<div class="t" style="left:390px;top:223px;font-size:11px;color:#000;letter-spacing:0.216px">Request for Change</div>
<div class="t" style="left:571px;top:223px;font-size:11px;color:#000;letter-spacing:-0.143px">0..*</div>
<div class="t" style="left:750px;top:223px;font-size:11px;color:#000;letter-spacing:0.240px">... Request for Change</div>
<div class="exp" style="left:347px;top:244px"><div class="abs" style="left:1px;top:3px;width:5px;height:1px;background:#000"></div></div>
<div class="abs" style="left:359px;top:241px;width:15px;height:13px"><svg width="15" height="13" viewBox="0 0 15 13"><defs><linearGradient id="fg7" x1="0" y1="0" x2="1" y2="1"><stop offset="0" stop-color="#fdfbe0"/><stop offset="0.6" stop-color="#f3eeb6"/><stop offset="1" stop-color="#e4db8e"/></linearGradient></defs><path d="M0.5 12.5 V1.5 Q0.5 0.5 1.5 0.5 H5.5 L7 2.5 H13.5 Q14.5 2.5 14.5 3.5 V12.5 Z" fill="url(#fg7)" stroke="#bdb58a"/><path d="M1 12.5 H14" stroke="#9d9670"/></svg></div>
<div class="t" style="left:377px;top:240px;font-size:11px;color:#000;letter-spacing:0.304px">QS und Corporate Identity</div>
<div class="t" style="left:571px;top:240px;font-size:11px;color:#000;letter-spacing:0.000px">1</div>
<svg class="abs" style="left:662px;top:242px" width="14" height="11" viewBox="0 0 14 11"><path d="M1 6 L5 10 L13 1 L5 7.5Z" fill="#1c7c30" stroke="#1c7c30" stroke-width="1.2" stroke-linejoin="round"/></svg>
<div class="t" style="left:750px;top:240px;font-size:11px;color:#000;letter-spacing:0.332px">... für Produkte</div>
<div class="exp" style="left:360px;top:261px"><div class="abs" style="left:1px;top:3px;width:5px;height:1px;background:#000"></div><div class="abs" style="left:3px;top:1px;width:1px;height:5px;background:#000"></div></div>
<div class="abs" style="left:372px;top:258px;width:15px;height:13px"><svg width="15" height="13" viewBox="0 0 15 13"><defs><linearGradient id="fg8" x1="0" y1="0" x2="1" y2="1"><stop offset="0" stop-color="#fdfbe0"/><stop offset="0.6" stop-color="#f3eeb6"/><stop offset="1" stop-color="#e4db8e"/></linearGradient></defs><path d="M0.5 12.5 V1.5 Q0.5 0.5 1.5 0.5 H5.5 L7 2.5 H13.5 Q14.5 2.5 14.5 3.5 V12.5 Z" fill="url(#fg8)" stroke="#bdb58a"/><path d="M1 12.5 H14" stroke="#9d9670"/></svg></div>
<div class="t" style="left:390px;top:257px;font-size:11px;color:#000;letter-spacing:0.402px">Normen und Richtlilnien</div>
<div class="t" style="left:571px;top:257px;font-size:11px;color:#000;letter-spacing:0.000px">1</div>
<svg class="abs" style="left:662px;top:259px" width="14" height="11" viewBox="0 0 14 11"><path d="M1 6 L5 10 L13 1 L5 7.5Z" fill="#1c7c30" stroke="#1c7c30" stroke-width="1.2" stroke-linejoin="round"/></svg>
<div class="t" style="left:750px;top:257px;font-size:11px;color:#000;letter-spacing:0.332px">... für Produkte</div>
<div class="exp" style="left:347px;top:278px"><div class="abs" style="left:1px;top:3px;width:5px;height:1px;background:#000"></div></div>
<div class="abs" style="left:359px;top:275px;width:15px;height:13px"><svg width="15" height="13" viewBox="0 0 15 13"><defs><linearGradient id="fg9" x1="0" y1="0" x2="1" y2="1"><stop offset="0" stop-color="#fdfbe0"/><stop offset="0.6" stop-color="#f3eeb6"/><stop offset="1" stop-color="#e4db8e"/></linearGradient></defs><path d="M0.5 12.5 V1.5 Q0.5 0.5 1.5 0.5 H5.5 L7 2.5 H13.5 Q14.5 2.5 14.5 3.5 V12.5 Z" fill="url(#fg9)" stroke="#bdb58a"/><path d="M1 12.5 H14" stroke="#9d9670"/></svg></div>
<div class="t" style="left:377px;top:274px;font-size:11px;color:#000;letter-spacing:0.623px">Ideen</div>
<div class="t" style="left:571px;top:274px;font-size:11px;color:#000;letter-spacing:0.000px">1</div>
<svg class="abs" style="left:662px;top:276px" width="14" height="11" viewBox="0 0 14 11"><path d="M1 6 L5 10 L13 1 L5 7.5Z" fill="#1c7c30" stroke="#1c7c30" stroke-width="1.2" stroke-linejoin="round"/></svg>
<div class="t" style="left:750px;top:274px;font-size:11px;color:#000;letter-spacing:0.332px">... für Produkte</div>
<div class="abs" style="left:371px;top:292px;width:17px;height:14px"><svg width="17" height="14" viewBox="0 0 17 14"><path d="M0.5 4 L6 3 L15.5 9.5 L4.5 13.5 Z" fill="#eef0b8" stroke="#303030"/><path d="M5 8 L10.5 1" stroke="#d08858" stroke-width="2"/><path d="M10 1.5 L11.5 0" stroke="#402010" stroke-width="1.8"/></svg></div>
<div class="t" style="left:390px;top:291px;font-size:11px;color:#000;letter-spacing:0.703px">Idee</div>
<div class="t" style="left:571px;top:291px;font-size:11px;color:#000;letter-spacing:-0.143px">0..*</div>
<div class="t" style="left:750px;top:291px;font-size:11px;color:#000;letter-spacing:0.248px">... für Ideen</div>
<div class="exp" style="left:347px;top:312px"><div class="abs" style="left:1px;top:3px;width:5px;height:1px;background:#000"></div><div class="abs" style="left:3px;top:1px;width:1px;height:5px;background:#000"></div></div>
<div class="abs" style="left:359px;top:309px;width:15px;height:13px"><svg width="15" height="13" viewBox="0 0 15 13"><defs><linearGradient id="fg11" x1="0" y1="0" x2="1" y2="1"><stop offset="0" stop-color="#fdfbe0"/><stop offset="0.6" stop-color="#f3eeb6"/><stop offset="1" stop-color="#e4db8e"/></linearGradient></defs><path d="M0.5 12.5 V1.5 Q0.5 0.5 1.5 0.5 H5.5 L7 2.5 H13.5 Q14.5 2.5 14.5 3.5 V12.5 Z" fill="url(#fg11)" stroke="#bdb58a"/><path d="M1 12.5 H14" stroke="#9d9670"/></svg></div>
<div class="t" style="left:377px;top:308px;font-size:11px;color:#000;letter-spacing:0.216px">Sonstige</div>
<div class="t" style="left:571px;top:308px;font-size:11px;color:#000;letter-spacing:0.000px">1</div>
<svg class="abs" style="left:662px;top:310px" width="14" height="11" viewBox="0 0 14 11"><path d="M1 6 L5 10 L13 1 L5 7.5Z" fill="#1c7c30" stroke="#1c7c30" stroke-width="1.2" stroke-linejoin="round"/></svg>
<div class="t" style="left:750px;top:308px;font-size:11px;color:#000;letter-spacing:0.332px">... für Produkte</div>
<div class="exp" style="left:347px;top:329px"><div class="abs" style="left:1px;top:3px;width:5px;height:1px;background:#000"></div></div>
<div class="abs" style="left:359px;top:326px;width:15px;height:13px"><svg width="15" height="13" viewBox="0 0 15 13"><defs><linearGradient id="fg12" x1="0" y1="0" x2="1" y2="1"><stop offset="0" stop-color="#fdfbe0"/><stop offset="0.6" stop-color="#f3eeb6"/><stop offset="1" stop-color="#e4db8e"/></linearGradient></defs><path d="M0.5 12.5 V1.5 Q0.5 0.5 1.5 0.5 H5.5 L7 2.5 H13.5 Q14.5 2.5 14.5 3.5 V12.5 Z" fill="url(#fg12)" stroke="#bdb58a"/><path d="M1 12.5 H14" stroke="#9d9670"/></svg></div>
<div class="t" style="left:377px;top:325px;font-size:11px;color:#000;letter-spacing:0.528px">Anforderungen</div>
<div class="t" style="left:571px;top:325px;font-size:11px;color:#000;letter-spacing:0.000px">1</div>
<svg class="abs" style="left:662px;top:327px" width="14" height="11" viewBox="0 0 14 11"><path d="M1 6 L5 10 L13 1 L5 7.5Z" fill="#1c7c30" stroke="#1c7c30" stroke-width="1.2" stroke-linejoin="round"/></svg>
<div class="t" style="left:750px;top:325px;font-size:11px;color:#000;letter-spacing:0.332px">... für Produkte</div>
<div class="abs" style="left:374px;top:343px;width:11px;height:14px"><svg width="11" height="14" viewBox="0 0 11 14"><defs><linearGradient id="dg13" x1="0" y1="0" x2="1" y2="1"><stop offset="0" stop-color="#fcfcf4"/><stop offset="1" stop-color="#dfe6a0"/></linearGradient></defs><path d="M0.5 0.5 H6.5 L10.5 4.5 V13.5 H0.5Z" fill="url(#dg13)" stroke="#c8c8c0"/><path d="M6.5 0 V3.5 H10.5 V13.5 H0" fill="none" stroke="#505048" stroke-width="1"/></svg></div>
<div class="t" style="left:390px;top:342px;font-size:11px;color:#000;letter-spacing:0.597px">Anforderung</div>
<div class="t" style="left:571px;top:342px;font-size:11px;color:#000;letter-spacing:-0.143px">0..*</div>
<div class="t" style="left:750px;top:342px;font-size:11px;color:#000;letter-spacing:0.332px">... für Produkte</div>
<div class="exp" style="left:347px;top:363px"><div class="abs" style="left:1px;top:3px;width:5px;height:1px;background:#000"></div></div>
<div class="abs" style="left:359px;top:360px;width:15px;height:13px"><svg width="15" height="13" viewBox="0 0 15 13"><defs><linearGradient id="fg14" x1="0" y1="0" x2="1" y2="1"><stop offset="0" stop-color="#fdfbe0"/><stop offset="0.6" stop-color="#f3eeb6"/><stop offset="1" stop-color="#e4db8e"/></linearGradient></defs><path d="M0.5 12.5 V1.5 Q0.5 0.5 1.5 0.5 H5.5 L7 2.5 H13.5 Q14.5 2.5 14.5 3.5 V12.5 Z" fill="url(#fg14)" stroke="#bdb58a"/><path d="M1 12.5 H14" stroke="#9d9670"/></svg></div>
<div class="t" style="left:377px;top:359px;font-size:11px;color:#000;letter-spacing:0.400px">Änderungsanträge</div>
<div class="t" style="left:571px;top:359px;font-size:11px;color:#000;letter-spacing:0.000px">1</div>
<svg class="abs" style="left:662px;top:361px" width="14" height="11" viewBox="0 0 14 11"><path d="M1 6 L5 10 L13 1 L5 7.5Z" fill="#1c7c30" stroke="#1c7c30" stroke-width="1.2" stroke-linejoin="round"/></svg>
<div class="t" style="left:750px;top:359px;font-size:11px;color:#000;letter-spacing:0.332px">... für Produkte</div>
<div class="abs" style="left:374px;top:377px;width:11px;height:14px"><svg width="11" height="14" viewBox="0 0 11 14"><defs><linearGradient id="dg15" x1="0" y1="0" x2="1" y2="1"><stop offset="0" stop-color="#fcfcf4"/><stop offset="1" stop-color="#dfe6a0"/></linearGradient></defs><path d="M0.5 0.5 H6.5 L10.5 4.5 V13.5 H0.5Z" fill="url(#dg15)" stroke="#c8c8c0"/><path d="M6.5 0 V3.5 H10.5 V13.5 H0" fill="none" stroke="#505048" stroke-width="1"/></svg></div>
<div class="t" style="left:390px;top:376px;font-size:11px;color:#000;letter-spacing:0.459px">Änderungsantrag</div>
<div class="t" style="left:571px;top:376px;font-size:11px;color:#000;letter-spacing:-0.143px">0..*</div>
<div class="t" style="left:750px;top:376px;font-size:11px;color:#000;letter-spacing:0.332px">... für Produkte</div>
<div class="exp" style="left:347px;top:397px"><div class="abs" style="left:1px;top:3px;width:5px;height:1px;background:#000"></div></div>
<div class="abs" style="left:359px;top:394px;width:15px;height:13px"><svg width="15" height="13" viewBox="0 0 15 13"><defs><linearGradient id="fg16" x1="0" y1="0" x2="1" y2="1"><stop offset="0" stop-color="#fdfbe0"/><stop offset="0.6" stop-color="#f3eeb6"/><stop offset="1" stop-color="#e4db8e"/></linearGradient></defs><path d="M0.5 12.5 V1.5 Q0.5 0.5 1.5 0.5 H5.5 L7 2.5 H13.5 Q14.5 2.5 14.5 3.5 V12.5 Z" fill="url(#fg16)" stroke="#bdb58a"/><path d="M1 12.5 H14" stroke="#9d9670"/></svg></div>
<div class="t" style="left:377px;top:393px;font-size:11px;color:#000;letter-spacing:-0.238px">Tickets</div>
<div class="t" style="left:571px;top:393px;font-size:11px;color:#000;letter-spacing:0.000px">1</div>
<svg class="abs" style="left:662px;top:395px" width="14" height="11" viewBox="0 0 14 11"><path d="M1 6 L5 10 L13 1 L5 7.5Z" fill="#1c7c30" stroke="#1c7c30" stroke-width="1.2" stroke-linejoin="round"/></svg>
<div class="t" style="left:750px;top:393px;font-size:11px;color:#000;letter-spacing:0.332px">... für Produkte</div>
<div class="abs" style="left:371px;top:411px;width:16px;height:16px"><svg width="16" height="16" viewBox="0 0 16 16"><defs><linearGradient id="tg" x1="0" y1="0" x2="1" y2="1"><stop offset="0" stop-color="#ffffff"/><stop offset="1" stop-color="#9cc4ee"/></linearGradient></defs><path d="M3 1.5 H9.5 L13.5 5.5 V14 H3Z" fill="url(#tg)"/><path d="M9.5 1.5 V5.5 H13.5" fill="#e8f4ff" stroke="#1a5fb0" stroke-width="0.8"/><path d="M8.00,4.00 L5.85,4.77 L6.83,6.83 L4.77,5.85 L4.00,8.00 L3.23,5.85 L1.17,6.83 L2.15,4.77 L0.00,4.00 L2.15,3.23 L1.17,1.17 L3.23,2.15 L4.00,0.00 L4.77,2.15 L6.83,1.17 L5.85,3.23Z" fill="#f8e000"/></svg></div>
<div class="t" style="left:390px;top:410px;font-size:11px;color:#fff;letter-spacing:0.065px">Ticket</div>
<div class="t" style="left:571px;top:410px;font-size:11px;color:#fff;letter-spacing:-0.143px">0..*</div>
<div class="t" style="left:750px;top:410px;font-size:11px;color:#fff;letter-spacing:0.125px">... für Tickets</div>
<div class="exp" style="left:347px;top:431px"><div class="abs" style="left:1px;top:3px;width:5px;height:1px;background:#000"></div><div class="abs" style="left:3px;top:1px;width:1px;height:5px;background:#000"></div></div>
<div class="abs" style="left:359px;top:428px;width:15px;height:13px"><svg width="15" height="13" viewBox="0 0 15 13"><defs><linearGradient id="fg18" x1="0" y1="0" x2="1" y2="1"><stop offset="0" stop-color="#fdfbe0"/><stop offset="0.6" stop-color="#f3eeb6"/><stop offset="1" stop-color="#e4db8e"/></linearGradient></defs><path d="M0.5 12.5 V1.5 Q0.5 0.5 1.5 0.5 H5.5 L7 2.5 H13.5 Q14.5 2.5 14.5 3.5 V12.5 Z" fill="url(#fg18)" stroke="#bdb58a"/><path d="M1 12.5 H14" stroke="#9d9670"/></svg></div>
<div class="t" style="left:377px;top:427px;font-size:11px;color:#000;letter-spacing:0.346px">Ordner</div>
<div class="t" style="left:571px;top:427px;font-size:11px;color:#000;letter-spacing:-0.143px">0..*</div>
<svg class="abs" style="left:662px;top:429px" width="14" height="11" viewBox="0 0 14 11"><path d="M1 6 L5 10 L13 1 L5 7.5Z" fill="#1c7c30" stroke="#1c7c30" stroke-width="1.2" stroke-linejoin="round"/></svg>
<div class="t" style="left:750px;top:427px;font-size:11px;color:#000;letter-spacing:0.332px">... für Produkte</div>
</body></html>
